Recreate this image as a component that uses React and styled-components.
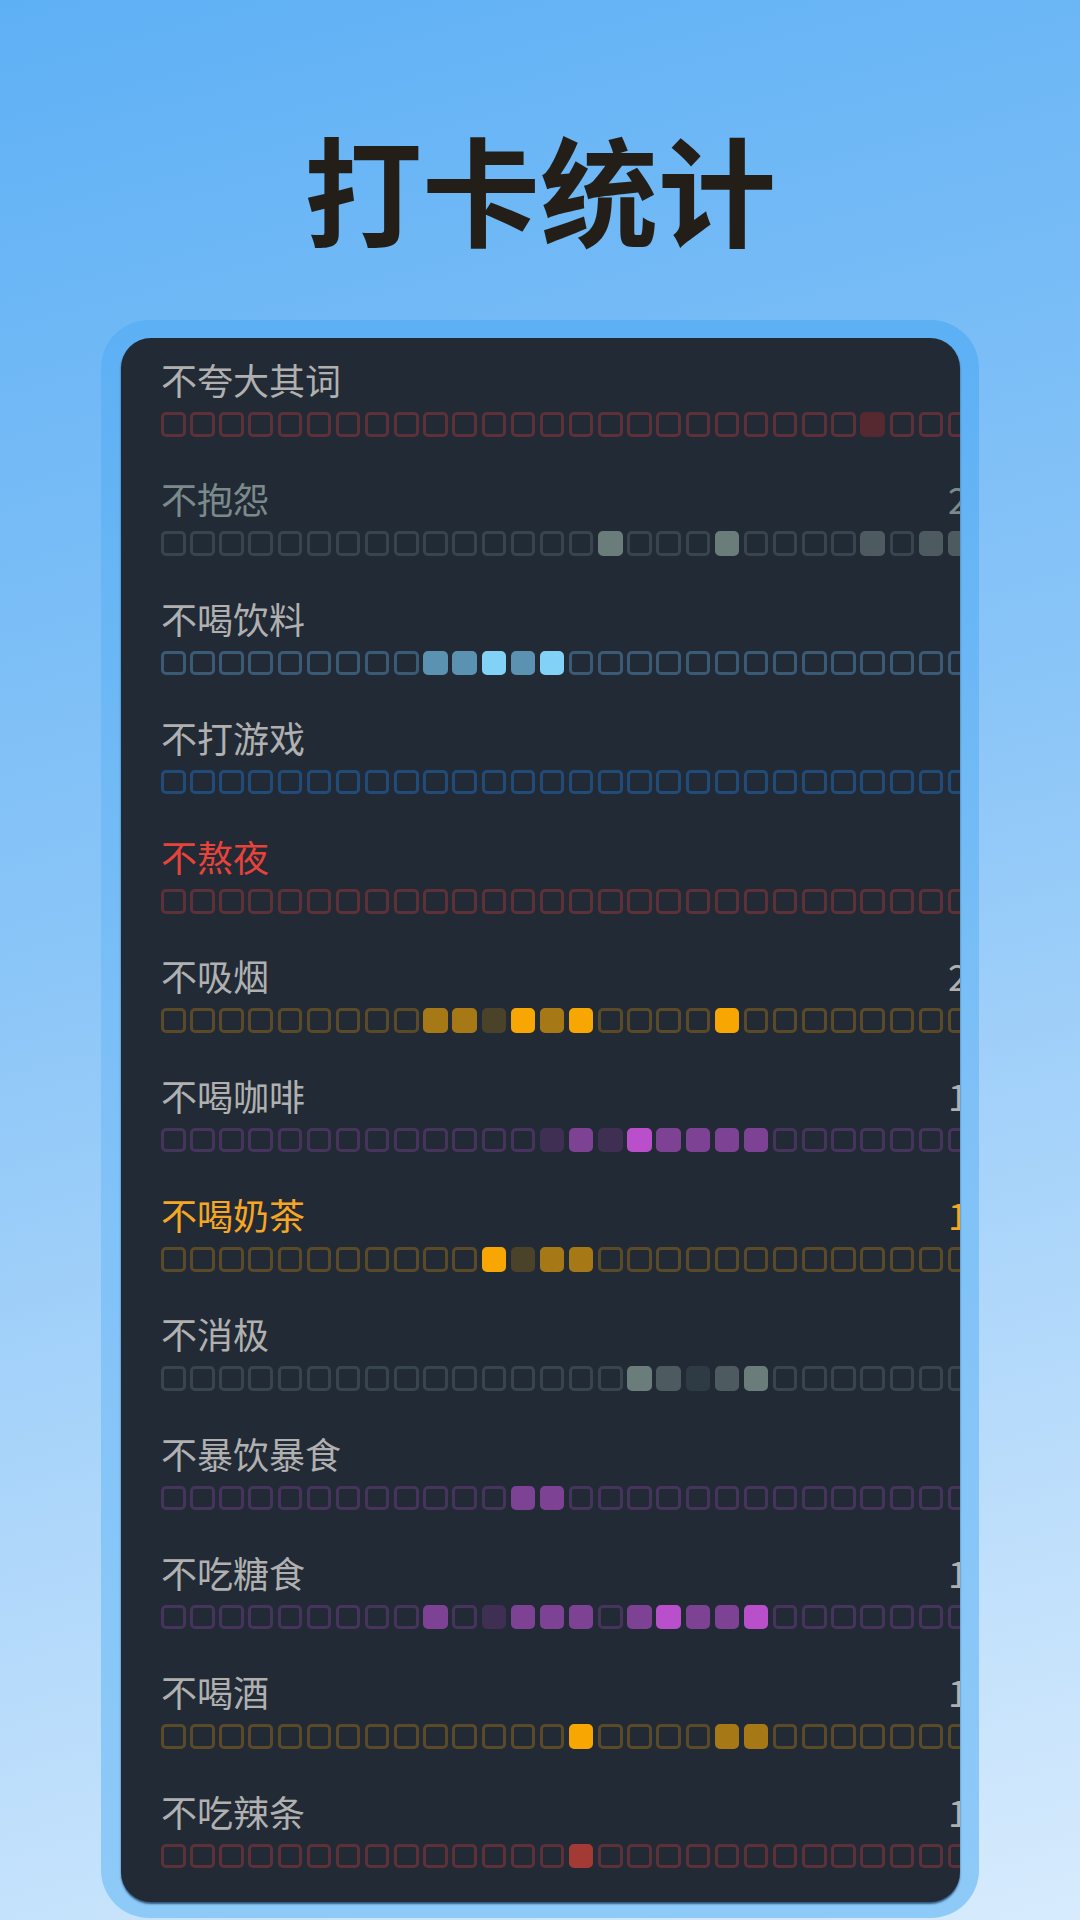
import React from "react";
import styled, { createGlobalStyle } from "styled-components";

const GlobalStyle = createGlobalStyle`
  html, body {
    margin: 0;
    padding: 0;
  }
  body {
    width: 1080px;
    height: 1920px;
    overflow: hidden;
    font-family: "Noto Sans CJK SC", "Noto Sans", sans-serif;
    background: linear-gradient(165deg, #5eb0f5 0%, #8cc6f8 45%, #d7ebfd 100%);
  }
`;

// palettes: outline + filled levels (1 = faint, 2 = medium, 3 = strong)
const palettes = {
  red: { line: "#5e3038", 1: "#55292f", 2: "#a33a35", 3: "#d8453c" },
  slate: { line: "#38454e", 1: "#2f3b44", 2: "#4d5b60", 3: "#6b7d7b" },
  sky: { line: "#3b5a75", 1: "#34506a", 2: "#5b91b1", 3: "#82d1f6" },
  navy: { line: "#214c7a", 1: "#1f3f60", 2: "#2c6aa6", 3: "#3d8fe0" },
  amber: { line: "#5b4a27", 1: "#4a4229", 2: "#a67916", 3: "#f8a602" },
  violet: { line: "#47345d", 1: "#3f2f52", 2: "#7d4294", 3: "#b94fcb" },
};

const DAYS = 31;

const habits = [
  { name: "不夸大其词", tone: "#b0b0b0", palette: "red", total: 6, days: { 24: 1 } },
  { name: "不抱怨", tone: "#7b8a8b", palette: "slate", total: 23, days: { 15: 3, 19: 3, 24: 2, 26: 2, 27: 2, 28: 2 } },
  { name: "不喝饮料", tone: "#b0b0b0", palette: "sky", total: 5, days: { 9: 2, 10: 2, 11: 3, 12: 2, 13: 3 } },
  { name: "不打游戏", tone: "#b0b0b0", palette: "navy", total: 0, days: {} },
  { name: "不熬夜", tone: "#e8433a", palette: "red", total: 0, days: {} },
  { name: "不吸烟", tone: "#b0b0b0", palette: "amber", total: 21, days: { 9: 2, 10: 2, 11: 1, 12: 3, 13: 2, 14: 3, 19: 3 } },
  { name: "不喝咖啡", tone: "#b0b0b0", palette: "violet", total: 12, days: { 13: 1, 14: 2, 15: 1, 16: 3, 17: 2, 18: 2, 19: 2, 20: 2 } },
  { name: "不喝奶茶", tone: "#f6a623", palette: "amber", total: 10, days: { 11: 3, 12: 1, 13: 2, 14: 2 } },
  { name: "不消极", tone: "#b0b0b0", palette: "slate", total: 5, days: { 16: 3, 17: 2, 18: 1, 19: 2, 20: 3 } },
  { name: "不暴饮暴食", tone: "#b0b0b0", palette: "violet", total: 2, days: { 12: 2, 13: 2 } },
  { name: "不吃糖食", tone: "#b0b0b0", palette: "violet", total: 15, days: { 9: 2, 11: 1, 12: 2, 13: 2, 14: 2, 16: 2, 17: 3, 18: 2, 19: 2, 20: 3 } },
  { name: "不喝酒", tone: "#b0b0b0", palette: "amber", total: 11, days: { 14: 3, 19: 2, 20: 2 } },
  { name: "不吃辣条", tone: "#b0b0b0", palette: "red", total: 13, days: { 14: 2 } },
];

const Page = styled.div`
  width: 1080px;
  height: 1920px;
`;

const Title = styled.h1`
  margin: 0;
  padding-top: 128px;
  font-size: 118px;
  line-height: 118px;
  font-weight: 700;
  text-align: center;
  color: #231f18;
  font-family: "Noto Sans CJK SC", sans-serif;
`;

const Frame = styled.div`
  width: 878px;
  box-sizing: border-box;
  margin: 74px auto 0;
  padding: 18px 19px 16px 20px;
  border-radius: 48px;
  background: linear-gradient(180deg, #5cb0f4 0%, #7fc1f7 50%, #8ecaf8 100%);
`;

const Board = styled.div`
  height: 1564px;
  box-sizing: border-box;
  border-radius: 30px;
  background: #212a35;
  overflow: hidden;
  box-shadow: 0 2px 2px rgba(18, 52, 88, 0.75);
`;

const Row = styled.div`
  width: 900px;
  padding: 19px 0 20.8px 40px;
`;

const Head = styled.div`
  width: 827px;
  display: flex;
  justify-content: space-between;
  font-size: 36px;
  line-height: 44px;
  color: ${(p) => p.$tone};
`;

const Strip = styled.div`
  display: flex;
  gap: 4.65px;
  margin-top: 11px;
`;

const Cell = styled.div`
  flex: 0 0 auto;
  width: 24.5px;
  height: 24.5px;
  box-sizing: border-box;
  border-radius: 5px;
  border: 3px solid ${(p) => (p.$fill ? p.$fill : p.$line)};
  background: ${(p) => p.$fill || "transparent"};
`;

function HabitRow({ habit }) {
  const pal = palettes[habit.palette];
  return (
    <Row>
      <Head $tone={habit.tone}>
        <span>{habit.name}</span>
        <span>{habit.total}</span>
      </Head>
      <Strip>
        {Array.from({ length: DAYS }, (_, i) => (
          <Cell key={i} $line={pal.line} $fill={habit.days[i] ? pal[habit.days[i]] : null} />
        ))}
      </Strip>
    </Row>
  );
}

export default function App() {
  return (
    <Page>
      <GlobalStyle />
      <Title>打卡统计</Title>
      <Frame>
        <Board>
          {habits.map((h) => (
            <HabitRow key={h.name} habit={h} />
          ))}
        </Board>
      </Frame>
    </Page>
  );
}
